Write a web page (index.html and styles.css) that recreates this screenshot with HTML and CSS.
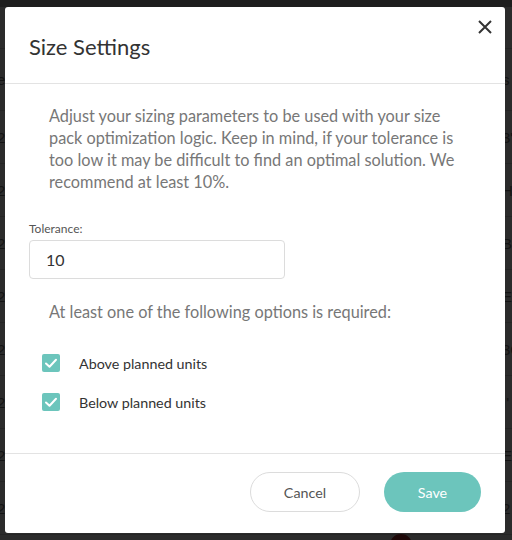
FILE: index.html
```html
<!DOCTYPE html>
<html>
<head>
<meta charset="utf-8">
<link rel="stylesheet" href="styles.css">
</head>
<body>
<div class="backdrop">
  <div class="bg-top"></div>
  <div class="bg-row h1"><span class="l">i</span><span class="r"></span></div>
  <div class="bg-row h2"><span class="l">e</span><span class="r">s</span></div>
  <div class="bg-row"><span class="l">2</span><span class="r">3"</span></div>
  <div class="bg-row"><span class="l">2</span><span class="r">HI</span></div>
  <div class="bg-row"><span class="l">2</span><span class="r">B</span></div>
  <div class="bg-row"><span class="l">2</span><span class="r">EB</span></div>
  <div class="bg-row"><span class="l">2</span><span class="r">3C</span></div>
  <div class="bg-row"><span class="l">2</span><span class="r">I'</span></div>
  <div class="bg-row"><span class="l">2</span><span class="r">E</span></div>
  <div class="bg-row"><span class="l">2</span><span class="r">2</span></div>
  <div class="bg-dot"></div>
</div>

<div class="modal">
  <div class="modal-header">
    <h2 class="title">Size Settings</h2>
    <button class="close" aria-label="Close">
      <svg width="14" height="14" viewBox="0 0 14 14"><path d="M1 1 L13 13 M13 1 L1 13" stroke="#333" stroke-width="2" fill="none"/></svg>
    </button>
  </div>
  <div class="modal-body">
    <p class="desc">Adjust your sizing parameters to be used with your size pack optimization logic. Keep in mind, if your tolerance is too low it may be difficult to find an optimal solution. We recommend at least 10%.</p>
    <label class="field-label">Tolerance:</label>
    <div class="input">10</div>
    <p class="desc req">At least one of the following options is required:</p>
    <div class="options">
      <div class="option">
        <span class="check"><svg width="18" height="18" viewBox="0 0 18 18"><polyline points="4,9.5 7.5,12.8 14,5.8" stroke="#fff" stroke-width="2" fill="none" stroke-linecap="round" stroke-linejoin="round"/></svg></span>
        <span class="opt-label">Above planned units</span>
      </div>
      <div class="option">
        <span class="check"><svg width="18" height="18" viewBox="0 0 18 18"><polyline points="4,9.5 7.5,12.8 14,5.8" stroke="#fff" stroke-width="2" fill="none" stroke-linecap="round" stroke-linejoin="round"/></svg></span>
        <span class="opt-label">Below planned units</span>
      </div>
    </div>
  </div>
  <div class="modal-footer">
    <button class="btn btn-cancel">Cancel</button>
    <button class="btn btn-save">Save</button>
  </div>
</div>
</body>
</html>
```
FILE: styles.css
```css
* { box-sizing: border-box; }
html, body {
  margin: 0;
  padding: 0;
  width: 512px;
  height: 540px;
  overflow: hidden;
  background: #2a2a2a;
  font-family: Lato, "Noto Sans", sans-serif;
}
.backdrop {
  position: relative;
  width: 512px;
  height: 540px;
  background: #2b2b2b;
  color: #141414;
  font-family: "Liberation Sans", sans-serif;
  font-size: 15px;
}
.bg-top { height: 7px; background: #1e1e1e; }
.bg-row {
  display: flex;
  justify-content: space-between;
  align-items: center;
  height: 53px;
  border-bottom: 1px solid #242424;
  margin: 0 -4px 0 -3px;
}
.bg-row.h1 { height: 42px; }
.bg-row.h2 { height: 62px; }
.bg-row .l { width: 10px; }
.bg-row .r { width: 14px; text-align: left; }
.bg-dot {
  position: absolute;
  left: 390px;
  top: 534px;
  width: 22px;
  height: 22px;
  border-radius: 50%;
  background: #1e0808;
}
.modal {
  position: absolute;
  left: 5px;
  top: 7px;
  width: 500px;
  height: 526px;
  background: #fff;
  border-radius: 3px;
  display: flex;
  flex-direction: column;
}
.modal-header {
  position: relative;
  height: 77px;
  border-bottom: 1px solid #e3e3e3;
  padding: 26px 24px 0 24px;
}
.title {
  margin: 0;
  font-size: 22px;
  font-weight: 400;
  color: #333;
  line-height: 28px;
}
.close {
  position: absolute;
  right: 13px;
  top: 13px;
  width: 14px;
  height: 14px;
  padding: 0;
  border: 0;
  background: none;
}
.close svg { display: block; }
.modal-body {
  flex: 1;
  padding: 21px 24px 0 24px;
}
.desc {
  margin: 0 22px 0 20px;
  font-size: 16.3px;
  line-height: 22px;
  color: #777;
}
.field-label {
  display: block;
  margin-top: 28px;
  font-size: 12px;
  line-height: 16px;
  color: #555;
}
.input {
  margin-top: 3px;
  width: 256px;
  height: 39px;
  border: 1px solid #dcdcdc;
  border-radius: 4px;
  padding: 0 16px;
  font-size: 16px;
  line-height: 37px;
  color: #333;
}
.req { margin-top: 22px; }
.options {
  display: flex;
  flex-direction: column;
  gap: 21px;
  margin: 31px 0 0 13px;
}
.option {
  display: flex;
  align-items: center;
  gap: 19px;
  height: 18px;
}
.check {
  width: 18px;
  height: 18px;
  border-radius: 2px;
  background: #6cc5bc;
  display: block;
}
.check svg { display: block; }
.opt-label {
  font-size: 14.3px;
  color: #333;
}
.modal-footer {
  height: 80px;
  border-top: 1px solid #e3e3e3;
  display: flex;
  justify-content: flex-end;
  align-items: flex-start;
  padding: 18px 24px 0 0;
  gap: 24px;
}
.btn {
  height: 40px;
  border-radius: 20px;
  font-family: Lato, "Noto Sans", sans-serif;
  font-size: 14.3px;
  padding: 0;
  cursor: pointer;
}
.btn-cancel {
  width: 110px;
  background: #fff;
  border: 1px solid #dcdcdc;
  color: #555;
}
.btn-save {
  width: 97px;
  background: #6cc5bc;
  border: 0;
  color: #fff;
}
```
